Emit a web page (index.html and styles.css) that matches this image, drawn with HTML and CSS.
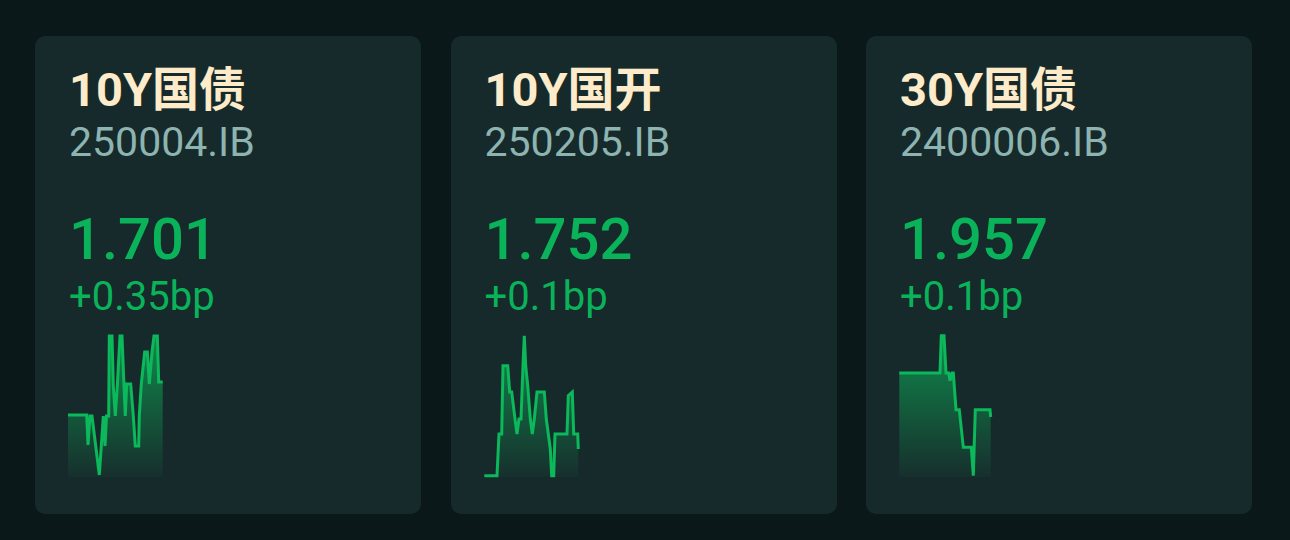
FILE: index.html
```html
<!DOCTYPE html>
<html lang="zh-CN">
<head>
    <meta charset="UTF-8">
    <meta name="viewport" content="width=device-width, initial-scale=1.0">
    <title>Bond Yields</title>
    <link rel="stylesheet" href="styles.css">
</head>
<body>
    <div class="grid">
        <!-- 10Y CGB -->
        <div class="card">
            <div class="name">10Y国债</div>
            <div class="code">250004.IB</div>
            <div class="yield">1.701</div>
            <div class="change">+0.35bp</div>
            <svg class="spark" width="100" height="142" viewBox="0 0 100 142">
                <defs>
                    <linearGradient id="fill1" x1="0" y1="0" x2="0" y2="1">
                        <stop offset="0" stop-color="#0cb35a" stop-opacity="0.7"/>
                        <stop offset="1" stop-color="#0cb35a" stop-opacity="0.04"/>
                    </linearGradient>
                </defs>
                <path class="area" fill="url(#fill1)" d="M0 80 L18.7 80 L20 110 L22 81 L24 81 L31.3 140 L33.3 111 L35.3 81 L37 111 L38.5 81 L40.7 81 L41.3 1 L44 1 L45.3 51 L47.3 81 L49.3 51 L52 1 L54 1 L56 51 L57.3 81 L58.7 49 L62.7 49 L65.3 81 L67.3 111 L70.7 111 L71.3 81 L73.3 49 L76.7 17 L79.3 17 L81.3 49 L84 17 L86 1 L89.3 1 L90.7 47 L94.7 47 L94.7 142 L0 142 Z"/>
                <polyline class="line" points="0,80 18.7,80 20,110 22,81 24,81 31.3,140 33.3,111 35.3,81 37,111 38.5,81 40.7,81 41.3,1 44,1 45.3,51 47.3,81 49.3,51 52,1 54,1 56,51 57.3,81 58.7,49 62.7,49 65.3,81 67.3,111 70.7,111 71.3,81 73.3,49 76.7,17 79.3,17 81.3,49 84,17 86,1 89.3,1 90.7,47 94.7,47"/>
            </svg>
        </div>

        <!-- 10Y CDB -->
        <div class="card">
            <div class="name">10Y国开</div>
            <div class="code">250205.IB</div>
            <div class="yield">1.752</div>
            <div class="change">+0.1bp</div>
            <svg class="spark" width="100" height="142" viewBox="0 0 100 142">
                <defs>
                    <linearGradient id="fill2" x1="0" y1="0" x2="0" y2="1">
                        <stop offset="0" stop-color="#0cb35a" stop-opacity="0.7"/>
                        <stop offset="1" stop-color="#0cb35a" stop-opacity="0.04"/>
                    </linearGradient>
                </defs>
                <path class="area" fill="url(#fill2)" d="M0.3 140.7 L13 140.7 L15 99 L17.7 99 L19 30.7 L23.7 30.7 L25.7 57 L27.7 57 L31 84 L33 99 L35 84 L37 84 L39 30.7 L40.3 0.7 L41.7 30.7 L43.7 50.7 L46.3 84 L48.3 99 L50.3 84 L53 57 L60.3 57 L62.3 84 L64.3 99 L66.3 114 L67.7 140.7 L69.7 140.7 L71 99 L83 99 L84.3 60.7 L88.3 57 L89.7 99 L93.7 99 L94.3 114 L94.3 142 L0.3 142 Z"/>
                <polyline class="line" points="0.3,140.7 13,140.7 15,99 17.7,99 19,30.7 23.7,30.7 25.7,57 27.7,57 31,84 33,99 35,84 37,84 39,30.7 40.3,0.7 41.7,30.7 43.7,50.7 46.3,84 48.3,99 50.3,84 53,57 60.3,57 62.3,84 64.3,99 66.3,114 67.7,140.7 69.7,140.7 71,99 83,99 84.3,60.7 88.3,57 89.7,99 93.7,99 94.3,114"/>
            </svg>
        </div>

        <!-- 30Y CGB -->
        <div class="card">
            <div class="name">30Y国债</div>
            <div class="code">2400006.IB</div>
            <div class="yield">1.957</div>
            <div class="change">+0.1bp</div>
            <svg class="spark" width="100" height="142" viewBox="0 0 100 142">
                <defs>
                    <linearGradient id="fill3" x1="0" y1="0" x2="0" y2="1">
                        <stop offset="0" stop-color="#0cb35a" stop-opacity="0.7"/>
                        <stop offset="1" stop-color="#0cb35a" stop-opacity="0.04"/>
                    </linearGradient>
                </defs>
                <path class="area" fill="url(#fill3)" d="M0.3 38 L41 38 L42.3 0.7 L45 0.7 L47 38 L49.7 38 L51 45.7 L53 38 L54.3 38 L57 74.7 L60.3 74.7 L64.3 112.3 L72.3 112.3 L74.3 140.7 L76.3 74.7 L91 74.7 L91.7 82 L91.7 142 L0.3 142 Z"/>
                <polyline class="line" points="0.3,38 41,38 42.3,0.7 45,0.7 47,38 49.7,38 51,45.7 53,38 54.3,38 57,74.7 60.3,74.7 64.3,112.3 72.3,112.3 74.3,140.7 76.3,74.7 91,74.7 91.7,82"/>
            </svg>
        </div>
    </div>
</body>
</html>
```

FILE: styles.css
```css
html, body {
    margin: 0;
    background-color: #0a1819;
}
body {
    padding: 36px 38px 26px 35px;
    font-family: Roboto, "Noto Sans CJK SC", sans-serif;
}
.grid {
    display: grid;
    grid-template-columns: repeat(3, 1fr);
    gap: 29.5px;
}
.card {
    height: 478px;
    box-sizing: border-box;
    padding: 26px 20px 0 34px;
    background-color: #172a2b;
    border-radius: 10px;
    display: flex;
    flex-direction: column;
}
.name {
    font-size: 47px;
    font-weight: 700;
    line-height: 56px;
    color: #fdebc9;
}
.code {
    font-size: 41px;
    line-height: 48px;
    color: #8db4b0;
}
.yield {
    margin-top: 41px;
    font-size: 58px;
    font-weight: 500;
    line-height: 64px;
    color: #0ab35a;
}
.change {
    margin-top: 1px;
    font-size: 40px;
    line-height: 50px;
    color: #0ab35a;
}
.spark {
    display: block;
    margin-top: 13px;
    margin-left: -1px;
    overflow: visible;
}
.line {
    fill: none;
    stroke: #0bb85a;
    stroke-width: 3;
    stroke-linejoin: miter;
}
```
